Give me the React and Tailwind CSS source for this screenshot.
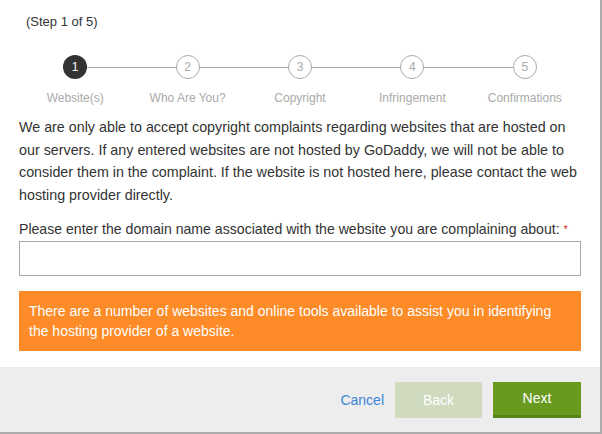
const STEPS = ["Website(s)", "Who Are You?", "Copyright", "Infringement", "Confirmations"];

export default function App() {
  return (
    <div className="w-[602px] h-[434px] bg-white font-['Liberation_Sans',Arial,sans-serif] text-[#333]">
      <div className="w-[602px] h-[434px] border-r-2 border-b-2 border-[#acacac] flex flex-col">
        <div className="px-[19px] pb-[16px]">
          <div className="pl-[7px] pt-[13px] text-[13px] leading-[18px]">(Step 1 of 5)</div>

          <div className="relative mt-[24px] grid grid-cols-5">
            <div className="absolute left-[56px] right-[56px] top-[12px] h-px bg-[#aaa]" />
            {STEPS.map((s, i) => (
              <div key={s} className="relative flex flex-col items-center">
                {i === 0 ? (
                  <div className="w-[24px] h-[24px] rounded-full bg-[#333] text-white text-[12px] flex items-center justify-center">1</div>
                ) : (
                  <div className="w-[24px] h-[24px] rounded-full bg-white border border-[#aaa] text-[#aaa] text-[12px] flex items-center justify-center">{i + 1}</div>
                )}
                <div className="mt-[11px] text-[12px] leading-[16px] text-[#aaa]">{s}</div>
              </div>
            ))}
          </div>

          <p className="mt-[10px] text-[14.3px] leading-[22.6px]">
            We are only able to accept copyright complaints regarding websites that are hosted on our servers. If any entered websites are not hosted by GoDaddy, we will not be able to consider them in the complaint. If the website is not hosted here, please contact the web hosting provider directly.
          </p>

          <div className="mt-[13px] text-[14.1px] leading-[20px]">
            Please enter the domain name associated with the website you are complaining about: <span className="text-[#e02020] text-[11px] align-top">*</span>
          </div>
          <input className="mt-[2px] block w-full h-[35px] border border-[#aaa] bg-white outline-none" />

          <div className="mt-[15px] bg-[#fd8b27] text-white text-[14px] leading-[20px] px-[10px] py-[10px]">
            There are a number of websites and online tools available to assist you in identifying the hosting provider of a website.
          </div>
        </div>

        <div className="flex-1 bg-[#ededed] flex justify-end items-start pt-[15px] pr-[19px]">
          <button className="h-[36px] mr-[11px] text-[14px] text-[#3b86d9]">Cancel</button>
          <button className="w-[87px] h-[36px] bg-[#cfdabe] text-white text-[14px]">Back</button>
          <button className="ml-[11px] w-[88px] h-[36px] bg-[#699a1f] border-b-[3px] border-[#578418] text-white text-[14px]">Next</button>
        </div>
      </div>
    </div>
  );
}
